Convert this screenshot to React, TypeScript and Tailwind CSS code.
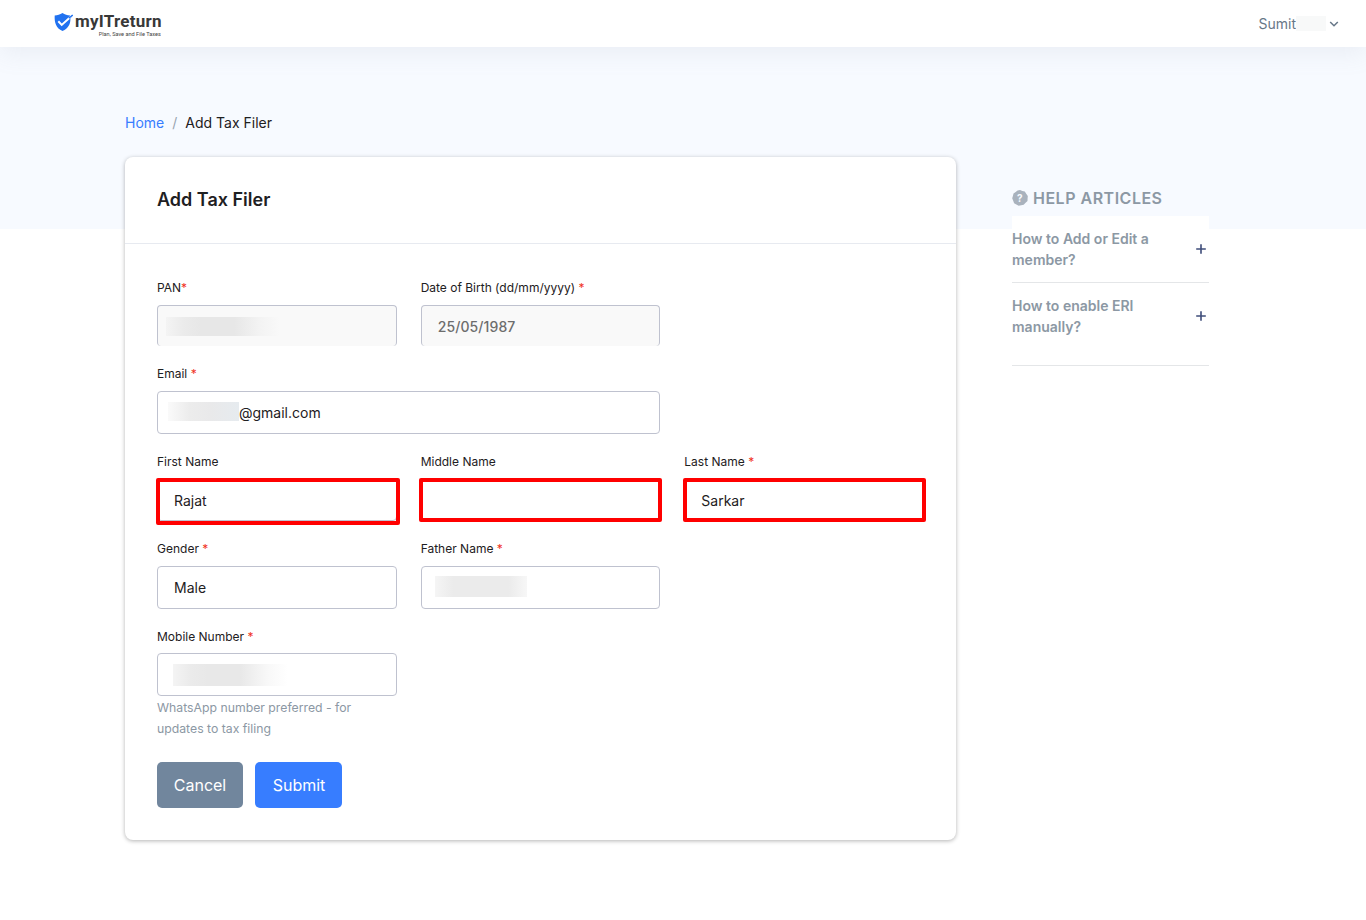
import type { ReactNode } from 'react';

interface FieldProps {
  label: string;
  required?: boolean;
  tight?: boolean;
  className?: string;
  children: ReactNode;
}

function Field({ label, required, tight, className = '', children }: FieldProps) {
  return (
    <div className={className}>
      <label className={`block text-[12px] leading-[18px] text-[#1e2022] ${tight ? 'h-[25px]' : 'h-[26px]'}`}>
        {label}
        {required && <span className="text-[#f0321e]">{label === 'PAN' ? '*' : ' *'}</span>}
      </label>
      {children}
    </div>
  );
}

interface BoxProps {
  disabled?: boolean;
  className?: string;
  children?: ReactNode;
}

function Box({ disabled, className = '', children }: BoxProps) {
  if (disabled) {
    return (
      <div className="flex h-[41px] items-center rounded-[4px] border border-b-0 border-[#bfc2cf] bg-[#f9f9f9] px-4 text-[14px] font-medium tracking-[0.1px] text-[#6d6d6d]">
        {children}
      </div>
    );
  }
  return (
    <div className={`flex h-[43px] items-center rounded-[4px] border border-[#bfc2cf] bg-white px-4 text-[14px] text-[#1e2022] ${className}`}>
      {children}
    </div>
  );
}

function Logo() {
  return (
    <div className="flex items-start">
      <svg className="mt-[13px] h-[18px] w-[19px]" viewBox="0 0 19 18" fill="none">
        <path d="M8.5 0C6 1.6 3.500 2.400 0.700 2.500C0.300 9.500 2 15.200 8.500 18C14.500 15.400 16.500 11 16.400 5.800L18.600 2.500L16.200 3.400L16 2.400C13.300 2.300 10.800 1.500 8.500 0Z" fill="#2172f0" />
        <path d="M4.300 8.300L7.700 11.900L17.600 3" stroke="white" strokeWidth="2" />
        <path d="M14.800 5.300L18.700 2" stroke="#2172f0" strokeWidth="1.500" />
      </svg>
      <div className="ml-[2px] mt-[11px] w-[86px]">
        <div className="whitespace-nowrap font-['Roboto'] text-[17px] font-bold leading-[20px] tracking-[0.25px] text-[#383838]">
          myITreturn
        </div>
        <div className="flex justify-end">
          <span className="origin-right scale-x-[0.93] whitespace-nowrap font-['Roboto'] text-[6px] leading-[6px] text-[#444]">
            Plan, Save and File Taxes
          </span>
        </div>
      </div>
    </div>
  );
}

function HelpIcon() {
  return (
    <svg className="h-4 w-4" viewBox="0 0 16 16">
      <path
        d="M8 0L10.300 1L12.800 1.600L14.200 3.800L15.800 5.900L15.600 8.400L15.500 11L13.600 12.700L11.700 14.700L9.200 15.300L6.700 15.700L4.300 14.500L2.100 13.200L1.200 10.700L0.200 8.300L0.900 5.900L1.500 3.400L3.700 2L5.600 0.600Z"
        fill="#a9b2bd"
      />
      <text x="8" y="11.700" textAnchor="middle" fontFamily="Inter, sans-serif" fontSize="10" fontWeight="700" fill="#f6faff">
        ?
      </text>
    </svg>
  );
}

interface ArticleProps {
  title: string;
  className: string;
}

function Article({ title, className }: ArticleProps) {
  return (
    <div className={`flex justify-between border-b border-[#e4e6e8] bg-white ${className}`}>
      <p className="w-[150px] text-[14px] font-semibold leading-[21px] text-[#8c98a4]">{title}</p>
      <svg className="mr-[2px] mt-[15px] h-[11px] w-[12px]" viewBox="0 0 12 11" stroke="#3f4d7a" strokeWidth="1.600">
        <path d="M1.200 6H10.800M6 1.200V10.800" />
      </svg>
    </div>
  );
}

export default function App() {
  return (
    <div className="h-[920px] w-[1366px] overflow-hidden bg-white font-['Inter',sans-serif]">
      <header className="relative flex h-[47px] justify-between bg-white pl-[54px] pr-[27px] shadow-[0_6px_24px_rgba(140,152,164,0.125)]">
        <Logo />
        <div className="flex h-[47px] items-center text-[14px] text-[#677788]">
          <span>Sumit</span>
          <span className="h-[15px] w-[30px] bg-[#f8f9f9]" />
          <svg className="ml-[3px] h-[10px] w-[10px]" viewBox="0 0 10 10" fill="none" stroke="#677788" strokeWidth="1.500">
            <path d="M1.200 3L5 6.800L8.800 3" />
          </svg>
        </div>
      </header>

      <main className="h-[873px] bg-[linear-gradient(#f7faff_182px,#ffffff_182px)] pl-[125px] pt-[65px]">
        <nav className="flex h-[45px] text-[14px] leading-[22px]">
          <a className="text-[#377dff]">Home</a>
          <span className="px-2 text-[#97a4af]">/</span>
          <span className="text-[#1e2022]">Add Tax Filer</span>
        </nav>

        <div className="flex items-start">
          <section className="h-[683px] w-[831px] rounded-[8px] bg-white shadow-[0_1px_4px_rgba(0,0,0,0.3)]">
            <div className="flex h-[87px] items-center border-b border-[#e7eaf0] px-8 pb-[2px]">
              <h1 className="text-[18px] font-semibold text-[#1e2022]">Add Tax Filer</h1>
            </div>

            <form className="px-8 pt-[35px]">
              <div className="grid h-[86px] grid-cols-3 gap-x-6">
                <Field label="PAN" required>
                  <Box disabled>
                    <span className="-ml-2 h-[19px] w-[114px] bg-[linear-gradient(90deg,#f4f4f4,#ebebeb_15%,#e7e7e7_30%,#e7e7e7_60%,#f3f3f3_82%,#f9f9f9)]" />
                  </Box>
                </Field>
                <Field label="Date of Birth (dd/mm/yyyy)" required>
                  <Box disabled>
                    <span>25/05/1987</span>
                  </Box>
                </Field>
              </div>

              <div className="grid h-[88px] grid-cols-3 gap-x-6">
                <Field label="Email" required className="col-span-2">
                  <Box>
                    <span className="-ml-[6px] mb-[2px] h-[19px] w-[71px] bg-[linear-gradient(90deg,#fafafa,#ececec_30%,#e9e9ea_60%,#e6ebef)]" />
                    <span>@gmail.com</span>
                  </Box>
                </Field>
              </div>

              <div className="grid h-[87px] grid-cols-3 gap-x-6">
                <Field label="First Name" tight className="relative">
                  <Box className="pt-[2px]">Rajat</Box>
                  <span className="absolute -left-px top-[25px] h-[47px] w-[244px] rounded-[2px] border-4 border-[#ff0000]" />
                </Field>
                <Field label="Middle Name" tight className="relative">
                  <Box />
                  <span className="absolute -left-[2px] top-[25px] h-[44px] w-[243px] rounded-[2px] border-4 border-[#ff0000]" />
                </Field>
                <Field label="Last Name" required tight className="relative">
                  <Box className="pt-[2px]">Sarkar</Box>
                  <span className="absolute -left-px top-[25px] h-[44px] w-[243px] rounded-[2px] border-4 border-[#ff0000]" />
                </Field>
              </div>

              <div className="grid h-[88px] grid-cols-3 gap-x-6">
                <Field label="Gender" required>
                  <Box>Male</Box>
                </Field>
                <Field label="Father Name" required>
                  <Box>
                    <span className="-ml-[3px] mb-[2px] h-[21px] w-[92px] bg-[linear-gradient(90deg,#f5f5f5,#ebebeb_20%,#ebebeb_80%,#f7f7f7)]" />
                  </Box>
                </Field>
              </div>

              <div className="grid h-[134px] grid-cols-3 gap-x-6">
                <Field label="Mobile Number" required tight>
                  <Box>
                    <span className="-ml-px h-[22px] w-[115px] bg-[linear-gradient(90deg,#f4f4f4,#ebebeb_15%,#e8e8e8_30%,#e8e8e8_58%,#f8f8f8_82%,#ffffff)]" />
                  </Box>
                  <p className="mt-px text-[12.250px] leading-[21px] text-[#8c98a4]">
                    WhatsApp number preferred - for
                    <br />
                    updates to tax filing
                  </p>
                </Field>
              </div>

              <div className="flex gap-3">
                <button type="button" className="h-[46px] w-[86px] rounded-[5px] bg-[#71869d] text-[16px] text-white">
                  Cancel
                </button>
                <button type="button" className="h-[46px] w-[87px] rounded-[5px] bg-[#377dff] pl-px text-[16px] text-white">
                  Submit
                </button>
              </div>
            </form>
          </section>

          <aside className="ml-[56px] w-[197px] pt-[30px]">
            <h2 className="flex h-[29px] items-start gap-[5px] text-[16px] font-semibold leading-[22px] tracking-[0.5px] text-[#8c98a4]">
              <span className="mt-[3px]">
                <HelpIcon />
              </span>
              <span className="whitespace-nowrap">HELP ARTICLES</span>
            </h2>
            <Article title="How to Add or Edit a member?" className="h-[67px] pt-[12px]" />
            <Article title="How to enable ERI manually?" className="h-[83px] pt-[12px]" />
          </aside>
        </div>
      </main>
    </div>
  );
}
